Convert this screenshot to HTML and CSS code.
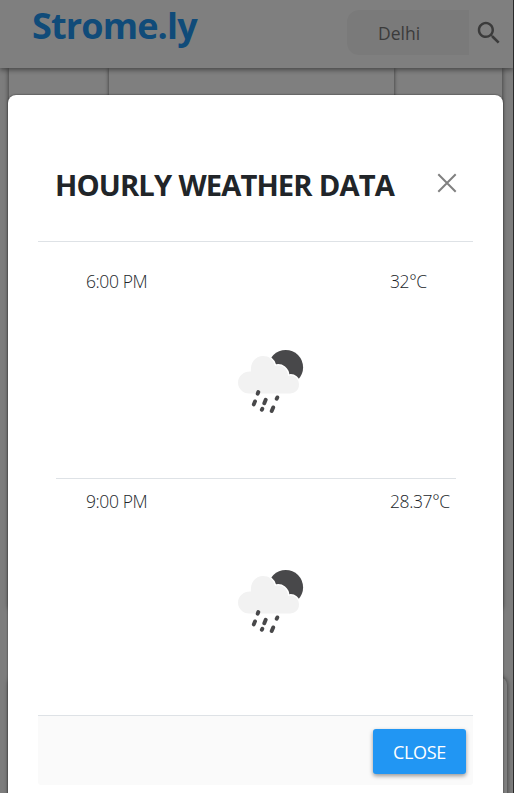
FILE: index.html
```html
<!DOCTYPE html>
<html lang="en">
<head>
<meta charset="utf-8">
<title>Strome.ly</title>
<link rel="stylesheet" href="styles.css">
</head>
<body>
<div class="page">
  <header class="navbar">
    <div class="brand"><span>Strome.ly</span></div>
    <div class="search"><span>Delhi</span></div>
    <svg class="search-icon" viewBox="0 0 24 24"><path d="M15.5 14h-.79l-.28-.27C15.41 12.59 16 11.11 16 9.5 16 5.91 13.09 3 9.5 3S3 5.91 3 9.5 5.91 16 9.5 16c1.61 0 3.09-.59 4.23-1.57l.27.28v.79l5 4.99L20.49 19l-4.99-5zm-6 0C7.01 14 5 11.99 5 9.5S7.01 5 9.5 5 14 7.01 14 9.5 11.99 14 9.5 14z"/></svg>
  </header>
  <main class="panel"><div class="panel-inner"></div></main>
  <section class="card"></section>
</div>
<div class="overlay">
  <div class="modal">
    <div class="modal-head">
      <h1><span>HOURLY WEATHER DATA</span></h1>
      <svg class="close-icon" viewBox="0 0 20 20"><path d="M1.3 1.3 18.7 18.7M18.7 1.3 1.3 18.7"/></svg>
    </div>
    <div class="modal-body">
      <div class="hour">
        <div class="row"><span>6:00 PM</span><span class="temp">32°C</span></div>
        <svg class="weather" viewBox="0 0 100 90"><use href="#rain"/></svg>
      </div>
      <div class="hour">
        <div class="row"><span>9:00 PM</span><span class="temp">28.37°C</span></div>
        <svg class="weather" viewBox="0 0 100 90"><use href="#rain"/></svg>
      </div>
    </div>
    <div class="modal-foot"><button class="close"><span>CLOSE</span></button></div>
  </div>
</div>
<svg class="defs">
  <symbol id="rain" viewBox="0 0 100 90">
    <circle cx="65.7" cy="32.4" r="17.4" fill="#48484a"/>
    <path d="M29 58.5A11 11 0 0 1 18 47.5C18 41 24 36 31 36.5C30 27 36 21 43 21C49 21 53 24 55 31C62 29 68 34 68 41C74 39 79 44 79 49.5C79 55 75 58.5 70 58.5Z" fill="#f2f2f2" stroke="#fff" stroke-width="3"/>
    <path d="M29 58.5A11 11 0 0 1 18 47.5C18 41 24 36 31 36.5C30 27 36 21 43 21C49 21 53 24 55 31C62 29 68 34 68 41C74 39 79 44 79 49.5C79 55 75 58.5 70 58.5Z" fill="#f2f2f2"/>
    <path d="M37.7 58.7l.6-1.7M33.8 69.4l1.2-3M44.3 68.2l1.4-3.4M56.7 63.8l.6-1.4M41.8 74.8l.5-1M51.7 76l1.5-3.6" stroke="#48484a" stroke-width="3.9" stroke-linecap="round"/>
  </symbol>
</svg>
</body>
</html>
```
FILE: styles.css
```css
* { box-sizing: border-box; }
html, body { margin: 0; height: 100%; overflow: hidden; }
body { font-family: "Segoe UI", "Open Sans", "Noto Sans", sans-serif; color: #212529; background: #fff; }
.defs { position: absolute; width: 0; height: 0; }
.page { height: 793px; overflow: hidden; background: #fafafa; border-right: 1px solid #555; }
.navbar { position: relative; z-index: 1; display: flex; height: 68px; padding: 0 0 0 32px; background: #fff; box-shadow: 0 2px 5px rgba(0,0,0,.45); }
.brand { width: 315px; font-size: 36px; line-height: 52px; font-weight: 700; color: #2196f3; letter-spacing: -.85px; }
.search { width: 122px; height: 45px; margin-top: 10px; padding-left: 31px; border-radius: 12px 0 0 12px; background: #f5f5f5; color: #777; font-size: 17.5px; line-height: 46px; }
.search-icon { width: 30px; height: 30px; margin: 18px 0 0 5px; fill: #777; }
.panel { height: 540px; margin: 0 11px 0 9px; background: #fff; box-shadow: 0 0 5px rgba(0,0,0,.6); }
.panel-inner { width: 285px; height: 540px; margin-left: 100px; box-shadow: 0 0 4px rgba(0,0,0,.6); }
.card { height: 140px; margin: 69px 6px 0 9px; border-radius: 8px; background: #fff; box-shadow: 0 0 5px rgba(0,0,0,.6); }
.overlay { position: absolute; inset: 0 0 auto; z-index: 2; height: 793px; padding: 95px 11px 0 8px; background: rgba(0,0,0,.5); overflow: hidden; }
.modal { height: 740px; padding: 30px; background: #fff; border-radius: 8px; box-shadow: 0 0 2px rgba(0,0,0,.7); }
.modal-head { display: flex; justify-content: space-between; height: 117px; padding: 48px 16px 0 18px; border-bottom: 1px solid #dee2e6; }
h1 { margin: 0 0 0 -1px; font-size: 29.2px; line-height: 24px; font-weight: 700; letter-spacing: -.9px; word-spacing: .5px; white-space: nowrap; }
.close-icon { width: 20px; height: 20px; fill: none; stroke: #808080; stroke-width: 2; }
.modal-body { height: 473px; padding: 17px 17px 0 18px; }
.hour { height: 220px; border-bottom: 1px solid #dee2e6; }
.hour + .hour { border: 0; }
.row { display: flex; height: 44px; padding-left: 30px; font-size: 17.5px; line-height: 44px; font-weight: 300; letter-spacing: -.4px; }
.row span:first-child { width: 304px; }
.weather { display: block; width: 100px; height: 90px; margin: 32px 0 0 164px; }
.modal-foot { display: flex; justify-content: flex-end; height: 70px; padding: 13px 7px 0 0; border-top: 1px solid #dee2e6; background: #fafafa; border-radius: 0 0 3px 3px; }
.close { width: 93px; height: 45px; padding: 0; border: 0; border-radius: 3px; background: #2196f3; color: #fff; font: 400 18px/46px "Open Sans", sans-serif; letter-spacing: -.3px; box-shadow: 0 2px 4px rgba(0,0,0,.4); }
```
